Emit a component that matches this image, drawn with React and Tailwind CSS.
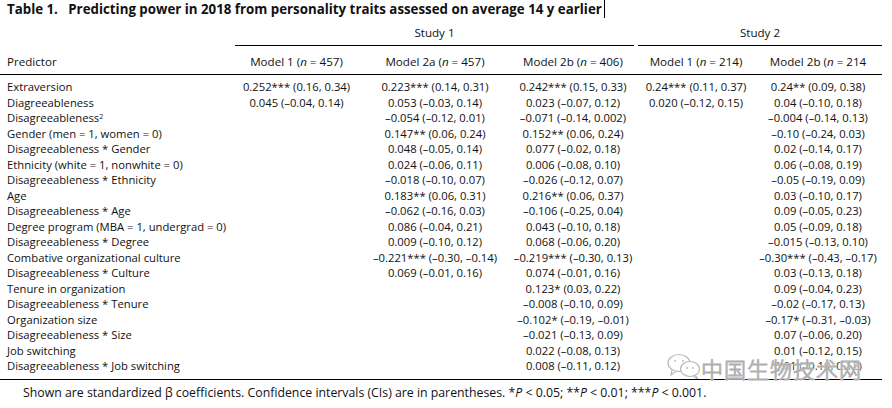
import React from 'react';

const rows = [
  ['Extraversion', '0.252*** (0.16, 0.34)', '0.223*** (0.14, 0.31)', '0.242*** (0.15, 0.33)', '0.24*** (0.11, 0.37)', '0.24** (0.09, 0.38)'],
  ['Diagreeableness', '0.045 (–0.04, 0.14)', '0.053 (–0.03, 0.14)', '0.023 (–0.07, 0.12)', '0.020 (–0.12, 0.15)', '0.04 (–0.10, 0.18)'],
  ['Disagreeableness²', '', '–0.054 (–0.12, 0.01)', '–0.071 (–0.14, 0.002)', '', '–0.004 (–0.14, 0.13)'],
  ['Gender (men = 1, women = 0)', '', '0.147** (0.06, 0.24)', '0.152** (0.06, 0.24)', '', '–0.10 (–0.24, 0.03)'],
  ['Disagreeableness * Gender', '', '0.048 (–0.05, 0.14)', '0.077 (–0.02, 0.18)', '', '0.02 (–0.14, 0.17)'],
  ['Ethnicity (white = 1, nonwhite = 0)', '', '0.024 (–0.06, 0.11)', '0.006 (–0.08, 0.10)', '', '0.06 (–0.08, 0.19)'],
  ['Disagreeableness * Ethnicity', '', '–0.018 (–0.10, 0.07)', '–0.026 (–0.12, 0.07)', '', '–0.05 (–0.19, 0.09)'],
  ['Age', '', '0.183** (0.06, 0.31)', '0.216** (0.06, 0.37)', '', '0.03 (–0.10, 0.17)'],
  ['Disagreeableness * Age', '', '–0.062 (–0.16, 0.03)', '–0.106 (–0.25, 0.04)', '', '0.09 (–0.05, 0.23)'],
  ['Degree program (MBA = 1, undergrad = 0)', '', '0.086 (–0.04, 0.21)', '0.043 (–0.10, 0.18)', '', '0.05 (–0.09, 0.18)'],
  ['Disagreeableness * Degree', '', '0.009 (–0.10, 0.12)', '0.068 (–0.06, 0.20)', '', '–0.015 (–0.13, 0.10)'],
  ['Combative organizational culture', '', '–0.221*** (–0.30, –0.14)', '–0.219*** (–0.30, 0.13)', '', '–0.30*** (–0.43, –0.17)'],
  ['Disagreeableness * Culture', '', '0.069 (–0.01, 0.16)', '0.074 (–0.01, 0.16)', '', '0.03 (–0.13, 0.18)'],
  ['Tenure in organization', '', '', '0.123* (0.03, 0.22)', '', '0.09 (–0.04, 0.23)'],
  ['Disagreeableness * Tenure', '', '', '–0.008 (–0.10, 0.09)', '', '–0.02 (–0.17, 0.13)'],
  ['Organization size', '', '', '–0.102* (–0.19, –0.01)', '', '–0.17* (–0.31, –0.03)'],
  ['Disagreeableness * Size', '', '', '–0.021 (–0.13, 0.09)', '', '0.07 (–0.06, 0.20)'],
  ['Job switching', '', '', '0.022 (–0.08, 0.13)', '', '0.01 (–0.12, 0.15)'],
  ['Disagreeableness * Job switching', '', '', '0.008 (–0.11, 0.12)', '', '0.01 (–0.10, 0.12)'],
];

const grid = 'grid grid-cols-[235px_123px_154px_122px_4px_116px_128px]';

function Label({ text }) {
  if (text.endsWith('²')) {
    return (
      <span>
        {text.slice(0, -1)}
        <sup className="text-[7px]">2</sup>
      </span>
    );
  }
  return text;
}

function Header({ label, n }) {
  return (
    <div className="text-center whitespace-nowrap">
      {label} (<i>n</i> = {n})
    </div>
  );
}

function WeChatMark() {
  return (
    <svg width="36" height="26" viewBox="0 0 36 26" fill="none" stroke="#b8b8b8" strokeWidth="1.2">
      <ellipse cx="13" cy="10" rx="11" ry="8.5" fill="white" />
      <path d="M6 17 L5 22 L10 18.5" fill="white" />
      <circle cx="9" cy="8" r="0.9" fill="#b8b8b8" stroke="none" />
      <circle cx="17" cy="8" r="0.9" fill="#b8b8b8" stroke="none" />
      <ellipse cx="24" cy="16" rx="9.5" ry="7.5" fill="white" />
      <path d="M29.5 22.5 L31.5 25.5 L27.5 23.5" fill="white" />
      <circle cx="21" cy="15" r="0.9" fill="#b8b8b8" stroke="none" />
      <circle cx="27" cy="15" r="0.9" fill="#b8b8b8" stroke="none" />
    </svg>
  );
}

export default function App() {
  return (
    <div className="relative w-[892px] h-[408px] bg-white text-[#111] font-['Open_Sans',sans-serif] text-[11.25px]">
      <div className="h-[22px] pl-[7px] flex items-start">
        <span className="font-bold text-[13.3px] leading-[18px] border-r border-black pr-[2px]">
          Table 1.&nbsp;&nbsp;&nbsp;Predicting power in 2018 from personality traits assessed on average 14 y earlier
        </span>
      </div>

      <div className={`${grid} w-[882px] h-[24px] text-[11.6px]`}>
        <div />
        <div className="col-span-3 border-b border-black flex items-center justify-center pb-[1px]">Study 1</div>
        <div />
        <div className="col-span-2 border-b border-black flex items-center justify-center pb-[1px]">Study 2</div>
      </div>

      <div className={`${grid} w-[882px] h-[29px] pt-[8px] leading-[16px] text-[11.6px] border-b border-black`}>
        <div className="pl-[7px]">Predictor</div>
        <Header label="Model 1" n="457" />
        <Header label="Model 2a" n="457" />
        <Header label="Model 2b" n="406" />
        <div />
        <Header label="Model 1" n="214" />
        <div className="text-center whitespace-nowrap">
          Model 2b (<i>n</i> = 214
        </div>
      </div>

      <div className="w-[882px] pt-[4px] pb-[5px] border-b border-black">
        {rows.map((r, i) => (
          <div key={i} className={`${grid} h-[15.5px] leading-[15.5px]`}>
            <div className="pl-[7px] whitespace-nowrap">
              <Label text={r[0]} />
            </div>
            <div className="text-center whitespace-nowrap">{r[1]}</div>
            <div className="text-center whitespace-nowrap">{r[2]}</div>
            <div className="text-center whitespace-nowrap">{r[3]}</div>
            <div />
            <div className="text-center whitespace-nowrap">{r[4]}</div>
            <div className="text-center whitespace-nowrap">{r[5]}</div>
          </div>
        ))}
      </div>

      <div className="pl-[23px] pt-[5px] leading-[16px] text-[12.3px] whitespace-nowrap">
        Shown are standardized β coefficients. Confidence intervals (CIs) are in parentheses. *<i>P</i> &lt; 0.05; **<i>P</i> &lt; 0.01; ***<i>P</i> &lt; 0.001.
      </div>

      <div className="absolute left-[666px] top-[353px] pointer-events-none">
        <WeChatMark />
      </div>
      <div className="absolute left-[701px] top-[355px] pointer-events-none">
        <span className="block text-[22px] leading-[26px] tracking-[1px] text-white font-['Noto_Sans_CJK_SC',sans-serif] font-light [-webkit-text-stroke:1px_#b0b0b0] [text-shadow:0_0_2px_#fff,0_0_3px_#fff,0_0_3px_#fff]">
          中国生物技术网
        </span>
      </div>
    </div>
  );
}
